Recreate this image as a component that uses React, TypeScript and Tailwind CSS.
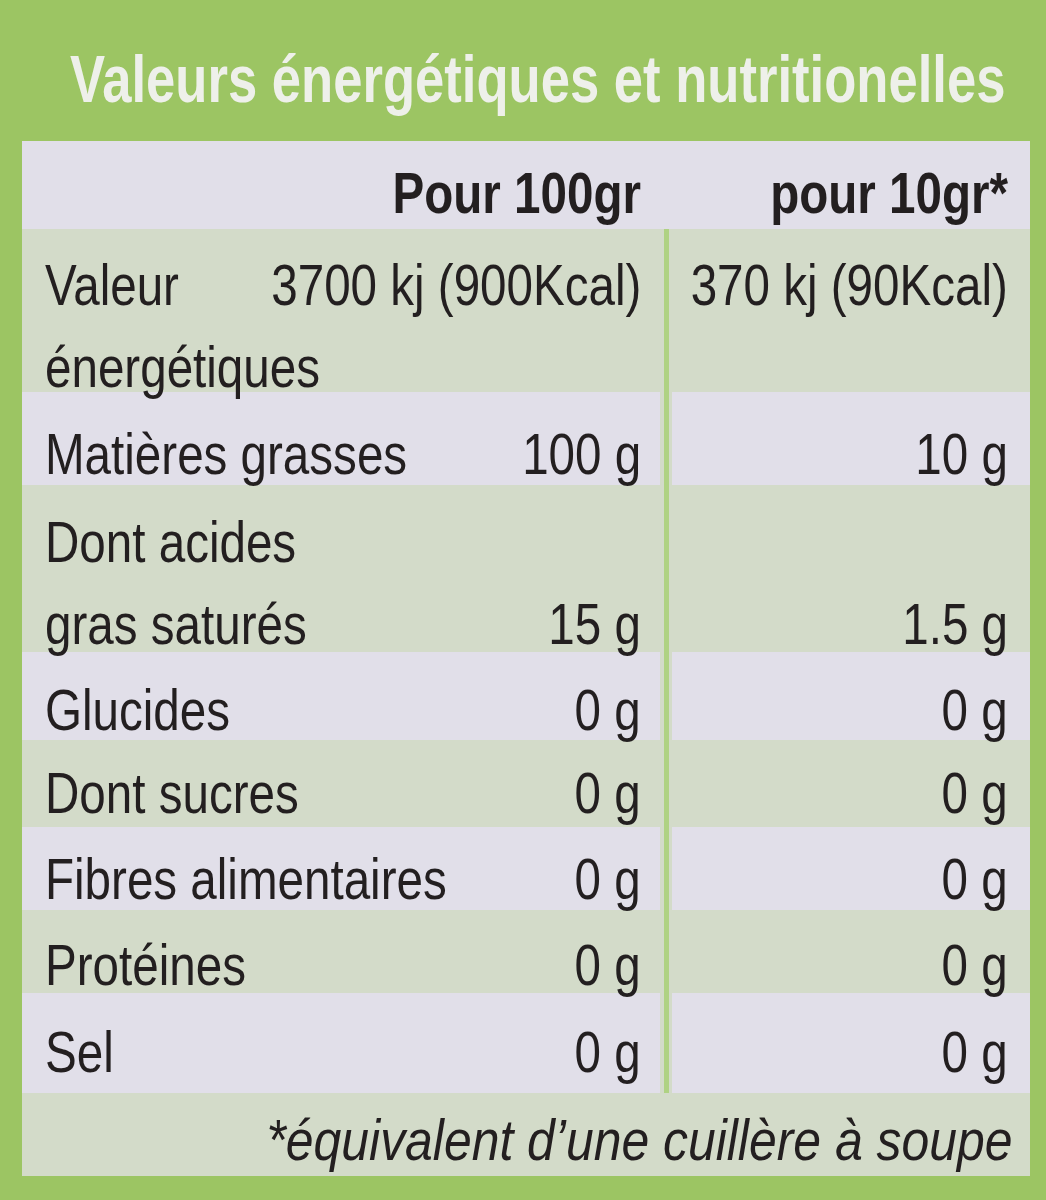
import React from "react";

type Line = [string, string, string];
type RowSpec = {
  h: string;
  bg: string;
  pt: string;
  lines: Line[];
};

const LAV = "bg-[#e1dfe9]";
const GRN = "bg-[#d3dbc9]";

const rows: RowSpec[] = [
  {
    h: "h-[163px]",
    bg: GRN,
    pt: "pt-[15px]",
    lines: [
      ["Valeur", "3700 kj (900Kcal)", "370 kj (90Kcal)"],
      ["énergétiques", "", ""],
    ],
  },
  { h: "h-[93px]", bg: LAV, pt: "pt-[21px]", lines: [["Matières grasses", "100 g", "10 g"]] },
  {
    h: "h-[167px]",
    bg: GRN,
    pt: "pt-[16px]",
    lines: [
      ["Dont acides", "", ""],
      ["gras saturés", "15 g", "1.5 g"],
    ],
  },
  { h: "h-[88px]", bg: LAV, pt: "pt-[17px]", lines: [["Glucides", "0 g", "0 g"]] },
  { h: "h-[87px]", bg: GRN, pt: "pt-[12px]", lines: [["Dont sucres", "0 g", "0 g"]] },
  { h: "h-[83px]", bg: LAV, pt: "pt-[11px]", lines: [["Fibres alimentaires", "0 g", "0 g"]] },
  { h: "h-[83px]", bg: GRN, pt: "pt-[14px]", lines: [["Protéines", "0 g", "0 g"]] },
  { h: "h-[100px]", bg: LAV, pt: "pt-[18px]", lines: [["Sel", "0 g", "0 g"]] },
];

function L({ children }: { children: React.ReactNode }) {
  return <span className="inline-block origin-left scale-x-[0.82]">{children}</span>;
}
function R({ children }: { children: React.ReactNode }) {
  return <span className="inline-block shrink-0 origin-right scale-x-[0.82]">{children}</span>;
}

function Row({ r }: { r: RowSpec }) {
  return (
    <div className={`flex ${r.h} ${r.bg}`}>
      <div className={`w-[638px] min-w-0 shrink-0 pl-[23px] pr-[19px] ${r.pt}`}>
        {r.lines.map((l, i) => (
          <div key={i} className="flex h-[82px] items-start justify-end whitespace-nowrap leading-[82px]">
            <div className="min-w-0 flex-1">
              <L>{l[0]}</L>
            </div>
            {l[1] ? <R>{l[1]}</R> : null}
          </div>
        ))}
      </div>
      <div className="flex w-[12px] shrink-0 justify-center bg-[#d3dbc9]">
        <div className="w-[5px] bg-[#afd283]" />
      </div>
      <div className={`w-[358px] min-w-0 shrink-0 pr-[22px] ${r.pt}`}>
        {r.lines.map((l, i) => (
          <div key={i} className="flex h-[82px] items-start justify-end whitespace-nowrap leading-[82px]">
            {l[2] ? <R>{l[2]}</R> : null}
          </div>
        ))}
      </div>
    </div>
  );
}

export default function App() {
  return (
    <div className="h-[1200px] w-[1046px] overflow-hidden bg-[#9cc563] font-['Liberation_Sans',Arial,sans-serif] text-[#231f20]">
      <div className="h-[141px] whitespace-nowrap pl-[70px] pt-[39px] text-[66px] font-bold leading-[80px] text-[#eef0ea]">
        <span className="inline-block origin-left scale-x-[0.797]">Valeurs énergétiques et nutritionelles</span>
      </div>
      <div className="ml-[22px] w-[1008px] text-[58px]">
        <div className={`flex h-[88px] ${LAV} pt-[11px] font-bold`}>
          <div className="flex h-[82px] w-[638px] shrink-0 justify-end whitespace-nowrap pr-[19px] leading-[82px]">
            <R>Pour 100gr</R>
          </div>
          <div className="w-[12px] shrink-0" />
          <div className="flex h-[82px] w-[358px] min-w-0 shrink-0 justify-end whitespace-nowrap pr-[22px] leading-[82px]">
            <R>pour 10gr*</R>
          </div>
        </div>
        {rows.map((r, i) => (
          <Row key={i} r={r} />
        ))}
        <div className={`flex h-[83px] justify-end ${GRN} pr-[18px] pt-[6px] italic`}>
          <div className="h-[82px] whitespace-nowrap leading-[82px]">
            <span className="inline-block origin-right scale-x-[0.86]">*équivalent d’une cuillère à soupe</span>
          </div>
        </div>
      </div>
    </div>
  );
}
